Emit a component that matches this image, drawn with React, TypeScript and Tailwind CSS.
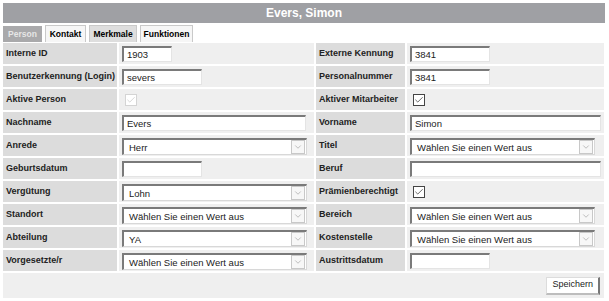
import { ChevronDown, Check } from "lucide-react";

type Field =
  | { kind: "text"; value: string; width: string }
  | { kind: "select"; value: string }
  | { kind: "check"; disabled?: boolean };

const rows: [string, Field, string, Field][] = [
  ["Interne ID", { kind: "text", value: "1903", width: "w-[50px]" }, "Externe Kennung", { kind: "text", value: "3841", width: "w-[80px]" }],
  ["Benutzerkennung (Login)", { kind: "text", value: "severs", width: "w-[80px]" }, "Personalnummer", { kind: "text", value: "3841", width: "w-[80px]" }],
  ["Aktive Person", { kind: "check", disabled: true }, "Aktiver Mitarbeiter", { kind: "check" }],
  ["Nachname", { kind: "text", value: "Evers", width: "w-[184px]" }, "Vorname", { kind: "text", value: "Simon", width: "w-[191px]" }],
  ["Anrede", { kind: "select", value: "Herr" }, "Titel", { kind: "select", value: "Wählen Sie einen Wert aus" }],
  ["Geburtsdatum", { kind: "text", value: "", width: "w-[80px]" }, "Beruf", { kind: "text", value: "", width: "w-[191px]" }],
  ["Vergütung", { kind: "select", value: "Lohn" }, "Prämienberechtigt", { kind: "check" }],
  ["Standort", { kind: "select", value: "Wählen Sie einen Wert aus" }, "Bereich", { kind: "select", value: "Wählen Sie einen Wert aus" }],
  ["Abteilung", { kind: "select", value: "YA" }, "Kostenstelle", { kind: "select", value: "Wählen Sie einen Wert aus" }],
  ["Vorgesetzte/r", { kind: "select", value: "Wählen Sie einen Wert aus" }, "Austrittsdatum", { kind: "text", value: "", width: "w-[80px]" }],
];

function Control({ field }: { field: Field }) {
  if (field.kind === "text") {
    return (
      <div
        className={`${field.width} h-[16px] bg-white border-t-2 border-l-2 border-[#7a7a7a] border-r border-b border-r-[#e4e4e4] border-b-[#e4e4e4] pl-[3px] text-[9.5px] leading-[13px] text-[#222]`}
      >
        {field.value}
      </div>
    );
  }
  if (field.kind === "select") {
    return (
      <div className="w-[185px] h-[17px] bg-white border-t-2 border-l-2 border-[#7a7a7a] border-r border-b border-r-[#d8d8d8] border-b-[#d8d8d8] flex items-center">
        <span className="flex-1 pl-[5px] text-[9.5px] leading-[13px] text-[#222] whitespace-nowrap">{field.value}</span>
        <span className="w-[14px] h-[14px] mr-[1px] border border-[#c8c8c8] bg-[#f7f7f7] flex items-center justify-center">
          <ChevronDown size={10} strokeWidth={1.5} className="text-[#9a9a9a]" />
        </span>
      </div>
    );
  }
  return (
    <div
      className={`w-[12px] h-[12px] ml-[3px] mt-[2px] border flex items-center justify-center bg-white ${
        field.disabled ? "border-[#d4d4d4] bg-[#f2f2f2]" : "border-[#444]"
      }`}
    >
      <Check size={10} strokeWidth={1.8} className={field.disabled ? "text-[#c8c8c8]" : "text-[#333]"} />
    </div>
  );
}

export default function App() {
  return (
    <div className="w-[609px] h-[301px] bg-white px-[3px] pt-[3px] font-['Liberation_Sans',Arial,sans-serif]">
      {/* title bar */}
      <div className="w-[602px] h-[20px] bg-[#9fa0a4] flex items-center justify-center text-white font-bold text-[12px]">
        Evers, Simon
      </div>

      {/* tabs */}
      <div className="flex gap-[3px] mt-[2px] h-[17px] text-[8.5px] font-bold">
        <div className="w-[39px] mt-[1px] bg-[#a9a9ab] text-[#e6e6e6] flex items-center justify-center">Person</div>
        <div className="w-[41px] bg-[#f6f6f6] border border-b-0 border-[#c9c9c9] text-black flex items-center justify-center">Kontakt</div>
        <div className="w-[48px] bg-[#dedede] border border-b-0 border-[#c9c9c9] text-black flex items-center justify-center">Merkmale</div>
        <div className="w-[53px] bg-[#f6f6f6] border border-b-0 border-[#c9c9c9] text-black flex items-center justify-center">Funktionen</div>
      </div>

      {/* form grid */}
      <div className="w-[601px] mt-[1px] grid grid-cols-[114px_195px_89px_1fr] gap-[2px] text-[9px]">
        {rows.map(([l1, f1, l2, f2]) => (
          <div key={l1} className="contents">
            <div className="h-[21px] bg-[#dcdcdc] pl-[3px] pt-[4px] font-bold text-[#222] whitespace-nowrap">{l1}</div>
            <div className="h-[21px] bg-[#efefef] pl-[3px] pt-[3px]">
              <Control field={f1} />
            </div>
            <div className="h-[21px] bg-[#dcdcdc] pl-[3px] pt-[4px] font-bold text-[#222] whitespace-nowrap">{l2}</div>
            <div className="h-[21px] bg-[#efefef] pl-[3px] pt-[3px]">
              <Control field={f2} />
            </div>
          </div>
        ))}
        <div className="col-span-4 h-[25px] bg-[#efefef] flex items-center justify-end pr-[4px]">
          <div className="h-[18px] px-[5px] bg-white border border-[#dcdcdc] border-r-2 border-b-2 border-r-[#777] border-b-[#bdbdbd] text-[9px] flex items-center text-[#222]">
            Speichern
          </div>
        </div>
      </div>
    </div>
  );
}
